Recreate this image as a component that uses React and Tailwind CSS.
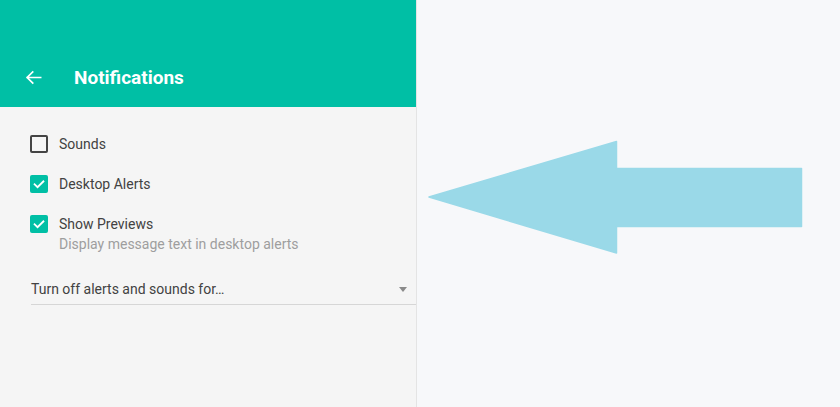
import React from "react";

function Check({ checked }) {
  if (!checked) {
    return <div className="w-[18px] h-[18px] rounded-[2px] border-2 border-[#444] box-border" />;
  }
  return (
    <div className="w-[18px] h-[18px] rounded-[2px] bg-[#00bfa5] flex items-center justify-center">
      <svg width="14" height="14" viewBox="0 0 24 24" fill="none" stroke="white" strokeWidth="3.2" strokeLinecap="square">
        <path d="M4.5 12.5l5 5 10-10" />
      </svg>
    </div>
  );
}

export default function App() {
  return (
    <div className="w-[840px] h-[407px] flex bg-[#f7f8fa] overflow-hidden" style={{ fontFamily: "Roboto, 'Liberation Sans', sans-serif" }}>
      <div className="w-[417px] h-full bg-[#f5f5f5] border-r border-[#e4e4e4] flex flex-col shrink-0">
        <div className="h-[107px] bg-[#00bfa5] flex items-end pb-[16px] pl-[24px]">
          <svg width="19" height="19" viewBox="0 0 24 24" fill="none" stroke="white" strokeWidth="2.2" strokeLinecap="square" className="mb-[4px]">
            <path d="M21 12H4M11 5l-7 7 7 7" />
          </svg>
          <span className="ml-[31px] text-white text-[19px] font-bold leading-[26px]">Notifications</span>
        </div>
        <div className="pl-[30px] pt-[28px] flex flex-col">
          <div className="flex items-center h-[18px]">
            <Check checked={false} />
            <span className="ml-[11px] text-[14px] text-[#424242]">Sounds</span>
          </div>
          <div className="flex items-center h-[18px] mt-[22px]">
            <Check checked />
            <span className="ml-[11px] text-[14px] text-[#424242]">Desktop Alerts</span>
          </div>
          <div className="flex items-center h-[18px] mt-[22px]">
            <Check checked />
            <span className="ml-[11px] text-[14px] text-[#424242]">Show Previews</span>
          </div>
          <div className="ml-[29px] mt-[1px] text-[14px] text-[#9e9e9e] leading-[20px]">Display message text in desktop alerts</div>
        </div>
        <div className="ml-[31px] mt-[20px] h-[31px] border-b border-[#d6d6d6] flex items-center justify-between pr-[9px]">
          <span className="text-[14px] text-[#424242]">Turn off alerts and sounds for…</span>
          <svg width="8" height="5" viewBox="0 0 8 5"><path d="M0 0h8L4 5z" fill="#8a8a8a" /></svg>
        </div>
      </div>
      <div className="flex-1 relative">
        <svg className="absolute left-0 top-0" width="423" height="407" viewBox="417 0 423 407">
          <path
            d="M429 197 L616.5 141.5 L616.5 168.5 L801.5 168.5 L801.5 226.5 L616.5 226.5 L616.5 253 Z"
            fill="#9ad9e8"
            stroke="#9ad9e8"
            strokeWidth="1.5"
            strokeLinejoin="round"
          />
        </svg>
      </div>
    </div>
  );
}
